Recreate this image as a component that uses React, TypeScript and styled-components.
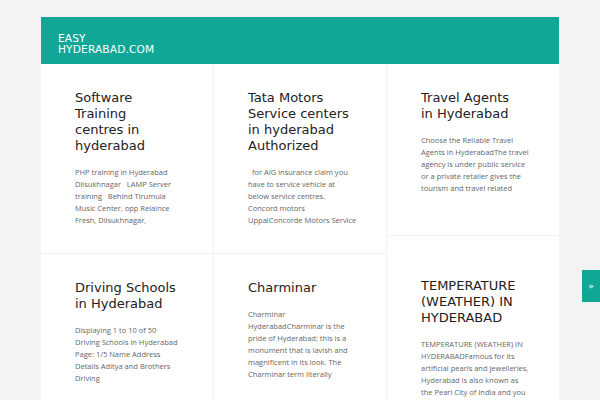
import * as React from "react";
import styled, { createGlobalStyle } from "styled-components";

const GlobalStyle = createGlobalStyle`
  html, body {
    margin: 0;
    padding: 0;
    background: #f3f3f3;
    overflow: hidden;
  }
`;

const Page = styled.div`
  padding: 17px 41px 0 41px;
  width: 600px;
  box-sizing: border-box;
`;

const Header = styled.div`
  background: #10a797;
  height: 47px;
  box-sizing: border-box;
  padding: 16px 17px 0 17px;
  color: #ffffff;
  font-family: "DejaVu Sans", sans-serif;
  font-size: 10.6px;
  line-height: 10.5px;
  letter-spacing: 0.15px;
`;

const Grid = styled.div`
  display: flex;
  background: #ffffff;
`;

const Column = styled.div`
  flex: 1 1 0;
  display: flex;
  flex-direction: column;
  border-left: 1px solid #f2f2f2;
  &:first-child {
    border-left: none;
  }
`;

const Card = styled.div<{ $top?: number; $bottom?: number }>`
  padding: ${(p) => p.$top ?? 26}px 20px ${(p) => p.$bottom ?? 27}px 34px;
  border-bottom: 1px solid #f2f2f2;
`;

const Title = styled.h2`
  margin: 0 0 12px 0;
  font-family: "DejaVu Sans", sans-serif;
  font-weight: normal;
  font-size: 13px;
  line-height: 16px;
  color: #222222;
`;

const Body = styled.div`
  font-family: "Open Sans", sans-serif;
  font-size: 7.5px;
  line-height: 12px;
  color: #666666;
  white-space: pre;
`;

const SideTab = styled.div`
  position: fixed;
  top: 270px;
  right: 0;
  width: 18px;
  height: 32px;
  background: #10a797;
  color: #ffffff;
  font-family: "DejaVu Sans", sans-serif;
  font-size: 9px;
  display: flex;
  align-items: center;
  justify-content: center;
`;

type Post = {
  title: string[];
  body: string[];
  top?: number;
  bottom?: number;
};

const columns: Post[][] = [
  [
    {
      title: ["Software", "Training", "centres in", "hyderabad"],
      body: [
        "PHP training in Hyderabad",
        "Dilsukhnagar   LAMP Server",
        "training   Behind Tirumula",
        "Music Center, opp Relaince",
        "Fresh, Dilsukhnagar,",
      ],
    },
    {
      title: ["Driving Schools", "in Hyderabad"],
      body: [
        "Displaying 1 to 10 of 50",
        "Driving Schools in Hyderabad",
        "Page: 1/5 Name Address",
        "Details Aditya and Brothers",
        "Driving",
      ],
    },
  ],
  [
    {
      title: ["Tata Motors", "Service centers", "in hyderabad", "Authorized"],
      body: [
        "  for AIG insurance claim you",
        "have to service vehicle at",
        "below service centres.",
        "Concord motors",
        "UppalConcorde Motors Service",
      ],
    },
    {
      title: ["Charminar"],
      body: [
        "Charminar",
        "HyderabadCharminar is the",
        "pride of Hyderabad; this is a",
        "monument that is lavish and",
        "magnificent in its look. The",
        "Charminar term literally",
      ],
    },
  ],
  [
    {
      title: ["Travel Agents", "in Hyderabad"],
      body: [
        "Choose the Reliable Travel",
        "Agents in HyderabadThe travel",
        "agency is under public service",
        "or a private retailer gives the",
        "tourism and travel related",
      ],
      bottom: 41,
    },
    {
      title: ["TEMPERATURE", "(WEATHER) IN", "HYDERABAD"],
      body: [
        "TEMPERATURE (WEATHER) IN",
        "HYDERABADFamous for its",
        "artificial pearls and jewelleries,",
        "Hyderabad is also known as",
        "the Pearl City of India and you",
      ],
      top: 42,
    },
  ],
];

const withBreaks = (lines: string[]) =>
  lines.map((line, i) => (
    <React.Fragment key={i}>
      {i > 0 && <br />}
      {line}
    </React.Fragment>
  ));

export default function App() {
  return (
    <>
      <GlobalStyle />
      <Page>
        <Header>
          EASY
          <br />
          HYDERABAD.COM
        </Header>
        <Grid>
          {columns.map((posts, c) => (
            <Column key={c}>
              {posts.map((post, i) => (
                <Card key={i} $top={post.top} $bottom={post.bottom}>
                  <Title>{withBreaks(post.title)}</Title>
                  <Body>{withBreaks(post.body)}</Body>
                </Card>
              ))}
            </Column>
          ))}
        </Grid>
      </Page>
      <SideTab>»</SideTab>
    </>
  );
}
